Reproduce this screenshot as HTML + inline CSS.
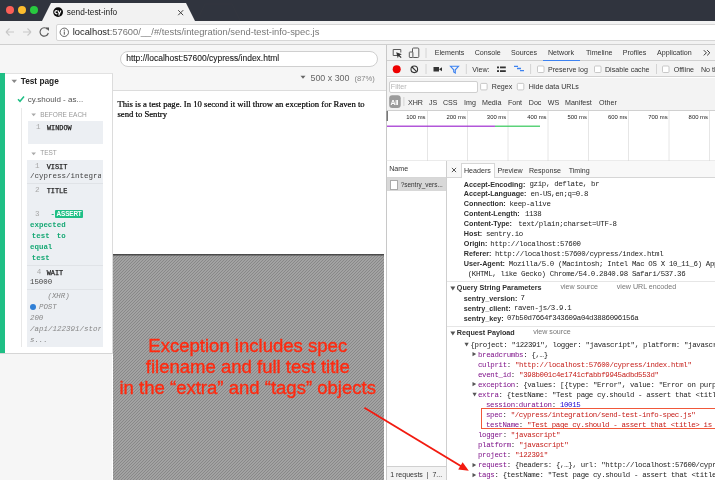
<!DOCTYPE html>
<html><head><meta charset="utf-8">
<style>
*{margin:0;padding:0;box-sizing:border-box;}
html,body{width:715px;height:480px;overflow:hidden;background:#f5f5f5;font-family:"Liberation Sans",sans-serif;}
.a{position:absolute;white-space:nowrap;}
#root{position:relative;width:715px;height:480px;overflow:hidden;will-change:transform;}
</style></head><body><div id="root">
<div class="a" style="left:0px;top:0px;width:715px;height:21px;background:#30343e;"></div>
<div class="a" style="left:5.6px;top:5.8px;width:8px;height:8px;border-radius:50%;background:#fc5f57;"></div>
<div class="a" style="left:18px;top:5.8px;width:8px;height:8px;border-radius:50%;background:#fdbd2e;"></div>
<div class="a" style="left:30.4px;top:5.8px;width:8px;height:8px;border-radius:50%;background:#28c93f;"></div>
<svg class="a" style="left:0;top:0" width="715" height="22">
  <polygon points="197,20.5 205,4 232,4 240,20.5" fill="none" stroke="#33373f" stroke-width="0.7"/>
  <polygon points="42,21 51,3 186,3 195,21" fill="#f2f2f2"/>
</svg>
<svg class="a" style="left:52px;top:6px" width="12" height="12">
  <circle cx="6.1" cy="6.1" r="4.9" fill="#0a0a0a"/>
  <path d="M5.3,4.9 A1.55,1.55 0 1 0 5.3,7.5" stroke="#fff" stroke-width="1.2" fill="none"/>
  <path d="M5.9,4.6 L7.3,7.7 M8.9,4.6 L6.7,9.4" stroke="#fff" stroke-width="1.15" fill="none"/>
</svg>
<div class="a " style="left:66.8px;top:7.67px;font-size:8.3px;line-height:8.3px;font-family:'Liberation Sans',sans-serif;color:#222;">send-test-info</div>
<svg class="a" style="left:177px;top:9px" width="8" height="8">
  <path d="M1.2,1.2 L6.2,6.2 M6.2,1.2 L1.2,6.2" stroke="#444" stroke-width="1"/>
</svg>
<div class="a" style="left:0px;top:21px;width:715px;height:23.5px;background:#f2f2f2;border-bottom:1px solid #cfcfcf;"></div>
<svg class="a" style="left:0;top:21px" width="56" height="23">
  <path d="M6,11 h8 M6,11 l3.5,-3.5 M6,11 l3.5,3.5" stroke="#c8c8c8" stroke-width="1.1" fill="none"/>
  <path d="M31,11 h-8 M31,11 l-3.5,-3.5 M31,11 l-3.5,3.5" stroke="#c8c8c8" stroke-width="1.1" fill="none"/>
  <path d="M47.5,8.3 A4.2,4.2 0 1 0 48.3,12" stroke="#555" stroke-width="1.1" fill="none"/>
  <path d="M45.5,6.5 L49,6.5 L49,10 Z" fill="#555"/>
</svg>
<div class="a" style="left:55.5px;top:23.5px;width:670px;height:17px;background:#fff;border:1px solid #d6d6d6;border-radius:2px;"></div>
<svg class="a" style="left:59px;top:27px" width="11" height="11">
  <circle cx="5.3" cy="5.3" r="4.2" stroke="#555" stroke-width="0.9" fill="none"/>
  <path d="M5.3,4.5 v3.2" stroke="#555" stroke-width="1"/>
  <circle cx="5.3" cy="3.2" r="0.6" fill="#555"/>
</svg>
<div class="a " style="left:72.7px;top:27.67px;font-size:9.37px;line-height:9.37px;font-family:'Liberation Sans',sans-serif;color:#777;"><span style="color:#222">localhost</span>:57600/__/#/tests/integration/send-test-info-spec.js</div>
<div class="a" style="left:0px;top:45px;width:386px;height:435px;background:#f6f6f6;"></div>
<div class="a" style="left:119.5px;top:50.5px;width:258px;height:16px;background:#fff;border:1px solid #cfcfcf;border-radius:8px;"></div>
<div class="a " style="left:126.2px;top:54.03px;font-size:8.47px;line-height:8.47px;font-family:'Liberation Sans',sans-serif;color:#222;-webkit-text-stroke:0.1px #222;">http://localhost:57600/cypress/index.html</div>
<svg class="a" style="left:300px;top:75px" width="6" height="5"><path d="M0.5,0.8 H5.5 L3,3.8 Z" fill="#666"/></svg>
<div class="a " style="left:310.5px;top:73.57px;font-size:8.9px;line-height:8.9px;font-family:'Liberation Sans',sans-serif;color:#666;">500 x 300</div>
<div class="a " style="left:354.5px;top:74.67px;font-size:7.6px;line-height:7.6px;font-family:'Liberation Sans',sans-serif;color:#888;">(87%)</div>
<div class="a" style="left:112px;top:89.5px;width:274px;height:1px;background:#dcdcdc;"></div>
<div class="a" style="left:112px;top:90.5px;width:274px;height:390px;background:#fff;"></div>
<div class="a " style="left:117.5px;top:100.14px;font-size:8.67px;line-height:8.67px;font-family:'Liberation Serif',serif;color:#000;-webkit-text-stroke:0.2px #000;">This is a test page. In 10 second it will throw an exception for Raven to</div>
<div class="a " style="left:117.5px;top:110.14px;font-size:8.67px;line-height:8.67px;font-family:'Liberation Serif',serif;color:#000;-webkit-text-stroke:0.2px #000;">send to Sentry</div>
<svg class="a" style="left:113px;top:253.5px" width="271" height="227">
 <defs><pattern id="st" width="3" height="3" patternUnits="userSpaceOnUse">
  <rect width="3" height="3" fill="#a2a2a2"/>
  <rect x="0" y="2" width="1" height="1" fill="#888"/><rect x="1" y="1" width="1" height="1" fill="#888"/><rect x="2" y="0" width="1" height="1" fill="#888"/>
 </pattern></defs>
 <rect width="271" height="227" fill="url(#st)"/>
 <rect width="271" height="1.5" fill="#4a4a4a"/>
</svg>
<div class="a" style="left:112.25px;top:337.10px;width:271px;text-align:center;font-size:18.55px;line-height:18.55px;color:#ff2a10;-webkit-text-stroke:0.35px #ff2a10;">Exception includes spec</div>
<div class="a" style="left:112.25px;top:357.90px;width:271px;text-align:center;font-size:18.55px;line-height:18.55px;color:#ff2a10;-webkit-text-stroke:0.35px #ff2a10;">filename and full test title</div>
<div class="a" style="left:112.25px;top:378.70px;width:271px;text-align:center;font-size:18.55px;line-height:18.55px;color:#ff2a10;-webkit-text-stroke:0.35px #ff2a10;">in the “extra” and “tags” objects</div>
<div class="a" style="left:0px;top:72.5px;width:112.5px;height:281px;background:#fff;border-top:1px solid #e2e2e2;border-right:1px solid #dcdcdc;border-bottom:1.5px solid #d6d6d6;"></div>
<div class="a" style="left:0px;top:73px;width:4.7px;height:280px;background:#1fbf85;"></div>
<svg class="a" style="left:11px;top:79px" width="7" height="5"><path d="M0.5,0.8 H6 L3.25,4 Z" fill="#888"/></svg>
<div class="a " style="left:20.7px;top:76.87px;font-size:8.3px;line-height:8.3px;font-family:'Liberation Sans',sans-serif;color:#222;font-weight:bold;">Test page</div>
<svg class="a" style="left:17px;top:95px" width="8" height="8"><path d="M1,4.2 L3,6.3 L7,1.6" stroke="#1fbf85" stroke-width="1.5" fill="none"/></svg>
<div class="a " style="left:27.7px;top:95.83px;font-size:8.0px;line-height:8.0px;font-family:'Liberation Sans',sans-serif;color:#555;">cy.should - as...</div>
<div class="a" style="left:20.5px;top:108px;width:1px;height:239px;background:#e8e8e8;"></div>
<svg class="a" style="left:31px;top:113px" width="6" height="4"><path d="M0.3,0.5 H5 L2.65,3.2 Z" fill="#aaa"/></svg>
<div class="a " style="left:40.2px;top:111.50px;font-size:6.5px;line-height:6.5px;font-family:'Liberation Sans',sans-serif;color:#999;">BEFORE EACH</div>
<div class="a" style="left:27.6px;top:120.8px;width:75.4px;height:23.2px;background:#eceff3;"></div>
<div class="a " style="left:36px;top:124.37px;font-size:7.6px;line-height:7.6px;font-family:'Liberation Mono',monospace;color:#a8a8a8;">1</div>
<div class="a " style="left:47px;top:124.96px;font-size:6.83px;line-height:6.83px;font-family:'Liberation Mono',monospace;color:#1e1e1e;-webkit-text-stroke:0.25px #1e1e1e;">WINDOW</div>
<svg class="a" style="left:31px;top:151.5px" width="6" height="4"><path d="M0.3,0.5 H5 L2.65,3.2 Z" fill="#aaa"/></svg>
<div class="a " style="left:40.2px;top:149.80px;font-size:6.5px;line-height:6.5px;font-family:'Liberation Sans',sans-serif;color:#999;">TEST</div>
<div class="a" style="left:27px;top:160px;width:76px;height:187px;background:#eceff3;"></div>
<div class="a" style="left:27px;top:183px;width:76px;height:1px;background:#e0e3e7;"></div>
<div class="a" style="left:27px;top:265px;width:76px;height:1px;background:#e0e3e7;"></div>
<div class="a" style="left:27px;top:289px;width:76px;height:1px;background:#e0e3e7;"></div>
<div class="a " style="left:35px;top:163.17px;font-size:7.6px;line-height:7.6px;font-family:'Liberation Mono',monospace;color:#a8a8a8;">1</div>
<div class="a " style="left:46.7px;top:163.71px;font-size:6.9px;line-height:6.9px;font-family:'Liberation Mono',monospace;color:#1e1e1e;-webkit-text-stroke:0.25px #1e1e1e;">VISIT</div>
<div class="a " style="left:30px;top:173.25px;font-size:7.5px;line-height:7.5px;font-family:'Liberation Mono',monospace;color:#444;width:70.5px;overflow:hidden;">/cypress/integration</div>
<div class="a " style="left:35px;top:187.17px;font-size:7.6px;line-height:7.6px;font-family:'Liberation Mono',monospace;color:#a8a8a8;">2</div>
<div class="a " style="left:46.7px;top:187.71px;font-size:6.9px;line-height:6.9px;font-family:'Liberation Mono',monospace;color:#1e1e1e;-webkit-text-stroke:0.25px #1e1e1e;">TITLE</div>
<div class="a " style="left:35px;top:210.67px;font-size:7.6px;line-height:7.6px;font-family:'Liberation Mono',monospace;color:#a8a8a8;">3</div>
<div class="a " style="left:50.5px;top:210.83px;font-size:7.4px;line-height:7.4px;font-family:'Liberation Mono',monospace;color:#1fae7a;font-weight:bold;">-</div>
<div class="a" style="left:55px;top:210px;width:28px;height:7.5px;background:#1fbf85;border-radius:1px;"></div>
<div class="a " style="left:56.6px;top:210.98px;font-size:6.4px;line-height:6.4px;font-family:'Liberation Sans',sans-serif;color:#fff;font-weight:bold;letter-spacing:-0.15px;">ASSERT</div>
<div class="a " style="left:30px;top:221.79px;font-size:7.45px;line-height:7.45px;font-family:'Liberation Mono',monospace;color:#16a874;font-weight:bold;">expected</div>
<div class="a " style="left:31.8px;top:232.89px;font-size:7.45px;line-height:7.45px;font-family:'Liberation Mono',monospace;color:#16a874;font-weight:bold;">test</div>
<div class="a " style="left:56.7px;top:232.89px;font-size:7.45px;line-height:7.45px;font-family:'Liberation Mono',monospace;color:#16a874;font-weight:bold;">to</div>
<div class="a " style="left:30px;top:243.99px;font-size:7.45px;line-height:7.45px;font-family:'Liberation Mono',monospace;color:#16a874;font-weight:bold;">equal</div>
<div class="a " style="left:31.8px;top:255.09px;font-size:7.45px;line-height:7.45px;font-family:'Liberation Mono',monospace;color:#16a874;font-weight:bold;">test</div>
<div class="a " style="left:36.7px;top:269.17px;font-size:7.6px;line-height:7.6px;font-family:'Liberation Mono',monospace;color:#a8a8a8;">4</div>
<div class="a " style="left:46.7px;top:269.71px;font-size:6.9px;line-height:6.9px;font-family:'Liberation Mono',monospace;color:#1e1e1e;-webkit-text-stroke:0.25px #1e1e1e;">WAIT</div>
<div class="a " style="left:30px;top:279.33px;font-size:7.4px;line-height:7.4px;font-family:'Liberation Mono',monospace;color:#444;">15000</div>
<div class="a " style="left:47.5px;top:293.33px;font-size:7.4px;line-height:7.4px;font-family:'Liberation Mono',monospace;color:#888;font-style:italic;">(XHR)</div>
<div class="a" style="left:30.3px;top:303.7px;width:6px;height:6px;border-radius:50%;background:#2f7fd6;"></div>
<div class="a " style="left:39px;top:304.03px;font-size:7.4px;line-height:7.4px;font-family:'Liberation Mono',monospace;color:#888;font-style:italic;">POST</div>
<div class="a " style="left:30px;top:315.13px;font-size:7.4px;line-height:7.4px;font-family:'Liberation Mono',monospace;color:#888;font-style:italic;">200</div>
<div class="a " style="left:30px;top:325.95px;font-size:7.5px;line-height:7.5px;font-family:'Liberation Mono',monospace;color:#888;font-style:italic;width:70.5px;overflow:hidden;">/api/122391/store</div>
<div class="a " style="left:30px;top:337.33px;font-size:7.4px;line-height:7.4px;font-family:'Liberation Mono',monospace;color:#888;font-style:italic;">s...</div>
<div class="a" style="left:386px;top:44.5px;width:329px;height:435.5px;background:#fff;border-left:1px solid #c8c8c8;"></div>
<div class="a" style="left:387px;top:44.5px;width:328px;height:16px;background:#f3f3f3;border-bottom:1px solid #d0d0d0;"></div>
<svg class="a" style="left:387px;top:45px" width="45" height="16">
  <path d="M10.5,10.5 H6.2 V4.5 H13.8 V7.5" stroke="#5a5a5a" stroke-width="1" fill="none"/>
  <path d="M9.2,7.2 L14.8,9.3 L12.6,10.2 L14.6,12.2 L13.7,13.1 L11.7,11.1 L10.8,13.3 Z" fill="#333"/>
  <rect x="25.5" y="3" width="6.3" height="9.5" rx="1" stroke="#5a5a5a" stroke-width="1" fill="none"/>
  <rect x="22.3" y="7" width="3.6" height="5.5" rx="0.6" stroke="#5a5a5a" stroke-width="1" fill="#f3f3f3"/>
  <path d="M39,3 V13" stroke="#d4d4d4" stroke-width="1"/>
</svg>
<div class="a " style="left:434.8px;top:50.19px;font-size:7.1px;line-height:7.1px;font-family:'Liberation Sans',sans-serif;color:#333;">Elements</div>
<div class="a " style="left:474.7px;top:50.19px;font-size:7.1px;line-height:7.1px;font-family:'Liberation Sans',sans-serif;color:#333;">Console</div>
<div class="a " style="left:511px;top:50.19px;font-size:7.1px;line-height:7.1px;font-family:'Liberation Sans',sans-serif;color:#333;">Sources</div>
<div class="a " style="left:548px;top:50.19px;font-size:7.1px;line-height:7.1px;font-family:'Liberation Sans',sans-serif;color:#333;">Network</div>
<div class="a " style="left:586px;top:50.19px;font-size:7.1px;line-height:7.1px;font-family:'Liberation Sans',sans-serif;color:#333;">Timeline</div>
<div class="a " style="left:622.7px;top:50.19px;font-size:7.1px;line-height:7.1px;font-family:'Liberation Sans',sans-serif;color:#333;">Profiles</div>
<div class="a " style="left:657px;top:50.19px;font-size:7.1px;line-height:7.1px;font-family:'Liberation Sans',sans-serif;color:#333;">Application</div>
<svg class="a" style="left:702px;top:48px" width="10" height="10"><path d="M1.8,2.2 L4.4,4.8 L1.8,7.4 M5.2,2.2 L7.8,4.8 L5.2,7.4" stroke="#333" stroke-width="1" fill="none"/></svg>
<div class="a" style="left:543px;top:59.5px;width:37px;height:1.5px;background:#3d82f0;"></div>
<div class="a" style="left:387px;top:61px;width:328px;height:16px;background:#f3f3f3;border-bottom:1px solid #d0d0d0;"></div>
<svg class="a" style="left:387px;top:61px" width="328" height="16">
  <circle cx="9.7" cy="8.3" r="4" fill="#e00"/>
  <circle cx="27.3" cy="8.3" r="3.3" stroke="#333" stroke-width="1.1" fill="none"/>
  <path d="M25,6 L29.6,10.6" stroke="#333" stroke-width="1.1"/>
  <path d="M39,3 V13" stroke="#d4d4d4" stroke-width="1"/>
  <rect x="46.5" y="6" width="5.5" height="4.5" fill="#333"/>
  <path d="M52,8.2 L55,6.3 V10.2 Z" fill="#333"/>
  <path d="M63.5,5.3 H71.5 L68.3,8.8 V12 L66.7,11 V8.8 Z" stroke="#3d82f0" stroke-width="1.1" fill="none"/>
  <path d="M79.3,3 V13" stroke="#d4d4d4" stroke-width="1"/>
  <rect x="110" y="5.5" width="2" height="1.8" fill="#333"/><rect x="113" y="5.5" width="5.8" height="1.8" fill="#333"/>
  <rect x="110" y="9.2" width="2" height="1.8" fill="#333"/><rect x="113" y="9.2" width="5.8" height="1.8" fill="#333"/>
  <path d="M127,5.3 h4 M130,7.5 h4 M133,9.7 h4" stroke="#3d82f0" stroke-width="1.3"/>
  <path d="M143.6,3 V13" stroke="#d4d4d4" stroke-width="1"/>
  <rect x="150.5" y="5" width="6.5" height="6.5" rx="1" stroke="#bbb" stroke-width="0.8" fill="#fff"/>
  <rect x="207.5" y="5" width="6.5" height="6.5" rx="1" stroke="#bbb" stroke-width="0.8" fill="#fff"/>
  <path d="M269.5,3 V13" stroke="#d4d4d4" stroke-width="1"/>
  <rect x="275.5" y="5" width="6.5" height="6.5" rx="1" stroke="#bbb" stroke-width="0.8" fill="#fff"/>
</svg>
<div class="a " style="left:472.3px;top:67.09px;font-size:7.1px;line-height:7.1px;font-family:'Liberation Sans',sans-serif;color:#333;">View:</div>
<div class="a " style="left:548px;top:67.09px;font-size:7.1px;line-height:7.1px;font-family:'Liberation Sans',sans-serif;color:#333;">Preserve log</div>
<div class="a " style="left:605px;top:67.09px;font-size:7.1px;line-height:7.1px;font-family:'Liberation Sans',sans-serif;color:#333;">Disable cache</div>
<div class="a " style="left:673.7px;top:67.09px;font-size:7.1px;line-height:7.1px;font-family:'Liberation Sans',sans-serif;color:#333;">Offline</div>
<div class="a " style="left:701px;top:67.09px;font-size:7.1px;line-height:7.1px;font-family:'Liberation Sans',sans-serif;color:#333;">No throttling</div>
<div class="a" style="left:387px;top:78px;width:328px;height:32.5px;background:#f3f3f3;border-bottom:1px solid #d0d0d0;"></div>
<div class="a" style="left:388.5px;top:80.5px;width:89.5px;height:12px;background:#fff;border:1px solid #cfcfcf;border-radius:2px;"></div>
<div class="a " style="left:390.8px;top:83.69px;font-size:7.1px;line-height:7.1px;font-family:'Liberation Sans',sans-serif;color:#b5b5b5;">Filter</div>
<svg class="a" style="left:387px;top:78px" width="328" height="33">
  <rect x="93.6" y="5.4" width="6.5" height="6.5" rx="1" stroke="#bbb" stroke-width="0.8" fill="#fff"/>
  <rect x="130.3" y="5.4" width="6.5" height="6.5" rx="1" stroke="#bbb" stroke-width="0.8" fill="#fff"/>
  <rect x="2.2" y="17.3" width="11.5" height="12.6" rx="3" fill="#9b9b9b"/>
  <path d="M16.9,19 V28" stroke="#d4d4d4" stroke-width="1"/>
</svg>
<div class="a " style="left:390.6px;top:98.87px;font-size:7px;line-height:7px;font-family:'Liberation Sans',sans-serif;color:#fff;font-weight:bold;letter-spacing:-0.5px;">All</div>
<div class="a " style="left:491.8px;top:84.19px;font-size:7.1px;line-height:7.1px;font-family:'Liberation Sans',sans-serif;color:#333;">Regex</div>
<div class="a " style="left:528.8px;top:84.19px;font-size:7.1px;line-height:7.1px;font-family:'Liberation Sans',sans-serif;color:#333;">Hide data URLs</div>
<div class="a " style="left:408px;top:99.59px;font-size:7.1px;line-height:7.1px;font-family:'Liberation Sans',sans-serif;color:#333;">XHR</div>
<div class="a " style="left:429px;top:99.59px;font-size:7.1px;line-height:7.1px;font-family:'Liberation Sans',sans-serif;color:#333;">JS</div>
<div class="a " style="left:443px;top:99.59px;font-size:7.1px;line-height:7.1px;font-family:'Liberation Sans',sans-serif;color:#333;">CSS</div>
<div class="a " style="left:464px;top:99.59px;font-size:7.1px;line-height:7.1px;font-family:'Liberation Sans',sans-serif;color:#333;">Img</div>
<div class="a " style="left:482px;top:99.59px;font-size:7.1px;line-height:7.1px;font-family:'Liberation Sans',sans-serif;color:#333;">Media</div>
<div class="a " style="left:507.9px;top:99.59px;font-size:7.1px;line-height:7.1px;font-family:'Liberation Sans',sans-serif;color:#333;">Font</div>
<div class="a " style="left:528.8px;top:99.59px;font-size:7.1px;line-height:7.1px;font-family:'Liberation Sans',sans-serif;color:#333;">Doc</div>
<div class="a " style="left:547.7px;top:99.59px;font-size:7.1px;line-height:7.1px;font-family:'Liberation Sans',sans-serif;color:#333;">WS</div>
<div class="a " style="left:565px;top:99.59px;font-size:7.1px;line-height:7.1px;font-family:'Liberation Sans',sans-serif;color:#333;">Manifest</div>
<div class="a " style="left:599px;top:99.59px;font-size:7.1px;line-height:7.1px;font-family:'Liberation Sans',sans-serif;color:#333;">Other</div>
<svg class="a" style="left:386px;top:111px" width="329" height="50">
  <g stroke="#e6e6e6" stroke-width="1">
    <path d="M41.5,0 V50 M81.5,0 V50 M122,0 V50 M162,0 V50 M202.5,0 V50 M242.5,0 V50 M283,0 V50 M323.5,0 V50"/>
  </g>
  <rect x="0.5" y="0" width="1.5" height="10" fill="#777"/>
  <rect x="1" y="14.6" width="108" height="1.2" fill="#a02ed0"/>
  <rect x="109" y="14.6" width="45" height="1.2" fill="#35c85a"/>
  <rect x="0" y="49.5" width="329" height="1" fill="#d6d6d6"/>
</svg>
<div class="a" style="left:385.50px;width:40px;text-align:right;top:114.61px;font-size:5.9px;line-height:5.9px;color:#1a1a1a;">100 ms</div>
<div class="a" style="left:425.85px;width:40px;text-align:right;top:114.61px;font-size:5.9px;line-height:5.9px;color:#1a1a1a;">200 ms</div>
<div class="a" style="left:466.20px;width:40px;text-align:right;top:114.61px;font-size:5.9px;line-height:5.9px;color:#1a1a1a;">300 ms</div>
<div class="a" style="left:506.55px;width:40px;text-align:right;top:114.61px;font-size:5.9px;line-height:5.9px;color:#1a1a1a;">400 ms</div>
<div class="a" style="left:546.90px;width:40px;text-align:right;top:114.61px;font-size:5.9px;line-height:5.9px;color:#1a1a1a;">500 ms</div>
<div class="a" style="left:587.25px;width:40px;text-align:right;top:114.61px;font-size:5.9px;line-height:5.9px;color:#1a1a1a;">600 ms</div>
<div class="a" style="left:627.60px;width:40px;text-align:right;top:114.61px;font-size:5.9px;line-height:5.9px;color:#1a1a1a;">700 ms</div>
<div class="a" style="left:667.95px;width:40px;text-align:right;top:114.61px;font-size:5.9px;line-height:5.9px;color:#1a1a1a;">800 ms</div>
<div class="a" style="left:446px;top:161px;width:1px;height:319px;background:#cfcfcf;"></div>
<div class="a" style="left:387px;top:176.8px;width:59px;height:1px;background:#d6d6d6;"></div>
<div class="a " style="left:389.2px;top:166.49px;font-size:7.1px;line-height:7.1px;font-family:'Liberation Sans',sans-serif;color:#333;">Name</div>
<div class="a" style="left:387px;top:178px;width:59px;height:13.3px;background:#d8d8d8;"></div>
<div class="a" style="left:390.2px;top:180.2px;width:7.4px;height:9.5px;background:#fff;border:1px solid #aaa;"></div>
<div class="a " style="left:400.7px;top:181.96px;font-size:6.43px;line-height:6.43px;font-family:'Liberation Sans',sans-serif;color:#333;">?sentry_vers...</div>
<div class="a" style="left:387px;top:466px;width:59px;height:14px;background:#f3f3f3;border-top:1px solid #d0d0d0;"></div>
<div class="a" style="left:446px;top:161px;width:1px;height:319px;background:#cfcfcf;"></div>
<div class="a " style="left:390.2px;top:471.07px;font-size:7.0px;line-height:7.0px;font-family:'Liberation Sans',sans-serif;color:#333;">1 requests&nbsp; |&nbsp; 7...</div>
<div class="a" style="left:447px;top:161px;width:268px;height:16.5px;background:#f8f8f8;border-bottom:1px solid #d6d6d6;"></div>
<svg class="a" style="left:450px;top:166px" width="8" height="8">
  <path d="M1.9,1.9 L6.1,6.1 M6.1,1.9 L1.9,6.1" stroke="#444" stroke-width="0.9"/>
</svg>
<div class="a" style="left:461.2px;top:163px;width:33.6px;height:15px;background:#fff;border:1px solid #d6d6d6;border-bottom:none;"></div>
<div class="a " style="left:464px;top:167.99px;font-size:7.1px;line-height:7.1px;font-family:'Liberation Sans',sans-serif;color:#333;">Headers</div>
<div class="a " style="left:497.5px;top:167.99px;font-size:7.1px;line-height:7.1px;font-family:'Liberation Sans',sans-serif;color:#333;">Preview</div>
<div class="a " style="left:529px;top:167.99px;font-size:7.1px;line-height:7.1px;font-family:'Liberation Sans',sans-serif;color:#333;">Response</div>
<div class="a " style="left:568.7px;top:167.99px;font-size:7.1px;line-height:7.1px;font-family:'Liberation Sans',sans-serif;color:#333;">Timing</div>
<div class="a " style="left:463.8px;top:180.51px;font-size:7.2px;line-height:7.2px;font-family:'Liberation Sans',sans-serif;color:#303030;font-weight:bold;">Accept-Encoding:</div>
<div class="a " style="left:529.5px;top:180.93px;font-size:7.4px;line-height:7.4px;font-family:'Liberation Mono',monospace;color:#222;letter-spacing:-0.33px;">gzip,&nbsp;deflate,&nbsp;br</div>
<div class="a " style="left:463.8px;top:190.46px;font-size:7.2px;line-height:7.2px;font-family:'Liberation Sans',sans-serif;color:#303030;font-weight:bold;">Accept-Language:</div>
<div class="a " style="left:530.6px;top:190.88px;font-size:7.4px;line-height:7.4px;font-family:'Liberation Mono',monospace;color:#222;letter-spacing:-0.33px;">en-US,en;q=0.8</div>
<div class="a " style="left:463.8px;top:200.41px;font-size:7.2px;line-height:7.2px;font-family:'Liberation Sans',sans-serif;color:#303030;font-weight:bold;">Connection:</div>
<div class="a " style="left:509.5px;top:200.83px;font-size:7.4px;line-height:7.4px;font-family:'Liberation Mono',monospace;color:#222;letter-spacing:-0.33px;">keep-alive</div>
<div class="a " style="left:463.8px;top:210.36px;font-size:7.2px;line-height:7.2px;font-family:'Liberation Sans',sans-serif;color:#303030;font-weight:bold;">Content-Length:</div>
<div class="a " style="left:524.9px;top:210.78px;font-size:7.4px;line-height:7.4px;font-family:'Liberation Mono',monospace;color:#222;letter-spacing:-0.33px;">1138</div>
<div class="a " style="left:463.8px;top:220.31px;font-size:7.2px;line-height:7.2px;font-family:'Liberation Sans',sans-serif;color:#303030;font-weight:bold;">Content-Type:</div>
<div class="a " style="left:518.2px;top:220.73px;font-size:7.4px;line-height:7.4px;font-family:'Liberation Mono',monospace;color:#222;letter-spacing:-0.33px;">text/plain;charset=UTF-8</div>
<div class="a " style="left:463.8px;top:230.26px;font-size:7.2px;line-height:7.2px;font-family:'Liberation Sans',sans-serif;color:#303030;font-weight:bold;">Host:</div>
<div class="a " style="left:485.9px;top:230.68px;font-size:7.4px;line-height:7.4px;font-family:'Liberation Mono',monospace;color:#222;letter-spacing:-0.33px;">sentry.io</div>
<div class="a " style="left:463.8px;top:240.21px;font-size:7.2px;line-height:7.2px;font-family:'Liberation Sans',sans-serif;color:#303030;font-weight:bold;">Origin:</div>
<div class="a " style="left:490.3px;top:240.63px;font-size:7.4px;line-height:7.4px;font-family:'Liberation Mono',monospace;color:#222;letter-spacing:-0.33px;">http://localhost:57600</div>
<div class="a " style="left:463.8px;top:250.16px;font-size:7.2px;line-height:7.2px;font-family:'Liberation Sans',sans-serif;color:#303030;font-weight:bold;">Referer:</div>
<div class="a " style="left:495px;top:250.58px;font-size:7.4px;line-height:7.4px;font-family:'Liberation Mono',monospace;color:#222;letter-spacing:-0.33px;">http://localhost:57600/cypress/index.html</div>
<div class="a " style="left:463.8px;top:260.11px;font-size:7.2px;line-height:7.2px;font-family:'Liberation Sans',sans-serif;color:#303030;font-weight:bold;">User-Agent:</div>
<div class="a " style="left:508.8px;top:260.53px;font-size:7.4px;line-height:7.4px;font-family:'Liberation Mono',monospace;color:#222;letter-spacing:-0.33px;">Mozilla/5.0&nbsp;(Macintosh;&nbsp;Intel&nbsp;Mac&nbsp;OS&nbsp;X&nbsp;10_11_6)&nbsp;AppleWebKit/537.36</div>
<div class="a " style="left:467.7px;top:271.13px;font-size:7.4px;line-height:7.4px;font-family:'Liberation Mono',monospace;color:#222;letter-spacing:-0.33px;">(KHTML,&nbsp;like&nbsp;Gecko)&nbsp;Chrome/54.0.2840.98&nbsp;Safari/537.36</div>
<div class="a" style="left:447px;top:281px;width:268px;height:1px;background:#e6e6e6;"></div>
<svg class="a" style="left:449.5px;top:285.6px" width="6" height="6"><path d="M0.3,0.5 H5.3 L2.8,4.6 Z" fill="#555"/></svg>
<div class="a " style="left:456.8px;top:284.01px;font-size:7.2px;line-height:7.2px;font-family:'Liberation Sans',sans-serif;color:#303030;font-weight:bold;">Query String Parameters</div>
<div class="a " style="left:560.5px;top:284.09px;font-size:7.1px;line-height:7.1px;font-family:'Liberation Sans',sans-serif;color:#777;">view source</div>
<div class="a " style="left:616.8px;top:284.09px;font-size:7.1px;line-height:7.1px;font-family:'Liberation Sans',sans-serif;color:#777;">view URL encoded</div>
<div class="a " style="left:463.8px;top:294.91px;font-size:7.2px;line-height:7.2px;font-family:'Liberation Sans',sans-serif;color:#303030;font-weight:bold;">sentry_version:</div>
<div class="a " style="left:520.5px;top:295.33px;font-size:7.4px;line-height:7.4px;font-family:'Liberation Mono',monospace;color:#222;letter-spacing:-0.33px;">7</div>
<div class="a " style="left:463.8px;top:304.91px;font-size:7.2px;line-height:7.2px;font-family:'Liberation Sans',sans-serif;color:#303030;font-weight:bold;">sentry_client:</div>
<div class="a " style="left:513.9px;top:305.33px;font-size:7.4px;line-height:7.4px;font-family:'Liberation Mono',monospace;color:#222;letter-spacing:-0.33px;">raven-js/3.9.1</div>
<div class="a " style="left:463.8px;top:314.91px;font-size:7.2px;line-height:7.2px;font-family:'Liberation Sans',sans-serif;color:#303030;font-weight:bold;">sentry_key:</div>
<div class="a " style="left:507px;top:315.33px;font-size:7.4px;line-height:7.4px;font-family:'Liberation Mono',monospace;color:#222;letter-spacing:-0.33px;">07b50d7664f343609a04d3886096156a</div>
<div class="a" style="left:447px;top:326px;width:268px;height:1px;background:#e6e6e6;"></div>
<svg class="a" style="left:449.5px;top:330.6px" width="6" height="6"><path d="M0.3,0.5 H5.3 L2.8,4.6 Z" fill="#555"/></svg>
<div class="a " style="left:456.8px;top:329.01px;font-size:7.2px;line-height:7.2px;font-family:'Liberation Sans',sans-serif;color:#303030;font-weight:bold;">Request Payload</div>
<div class="a " style="left:533.2px;top:329.09px;font-size:7.1px;line-height:7.1px;font-family:'Liberation Sans',sans-serif;color:#777;">view source</div>
<div class="a " style="left:470.5px;top:341.73px;font-size:7.4px;line-height:7.4px;font-family:'Liberation Mono',monospace;letter-spacing:-0.33px;"><span style="color:#222">{project:&nbsp;"122391",&nbsp;logger:&nbsp;"javascript",&nbsp;platform:&nbsp;"javascript"}</span></div>
<svg class="a" style="left:464.00px;top:341.90px" width="6" height="6"><path d="M0.5,0.8 H4.7 L2.6,4.6 Z" fill="#555"/></svg>
<div class="a " style="left:478px;top:351.75px;font-size:7.4px;line-height:7.4px;font-family:'Liberation Mono',monospace;letter-spacing:-0.33px;"><span style="color:#7e1189">breadcrumbs</span><span style="color:#222">:&nbsp;{,…}</span></div>
<svg class="a" style="left:471.50px;top:351.42px" width="6" height="6"><path d="M0.5,1 V5.2 L4.2,3.1 Z" fill="#555"/></svg>
<div class="a " style="left:478px;top:361.77px;font-size:7.4px;line-height:7.4px;font-family:'Liberation Mono',monospace;letter-spacing:-0.33px;"><span style="color:#7e1189">culprit</span><span style="color:#222">:&nbsp;</span><span style="color:#c41a16">"http://localhost:57600/cypress/index.html"</span></div>
<div class="a " style="left:478px;top:371.79px;font-size:7.4px;line-height:7.4px;font-family:'Liberation Mono',monospace;letter-spacing:-0.33px;"><span style="color:#7e1189">event_id</span><span style="color:#222">:&nbsp;</span><span style="color:#c41a16">"398b001c4e1741cfabbf9945adbd553d"</span></div>
<div class="a " style="left:478px;top:381.81px;font-size:7.4px;line-height:7.4px;font-family:'Liberation Mono',monospace;letter-spacing:-0.33px;"><span style="color:#7e1189">exception</span><span style="color:#222">:&nbsp;{values:&nbsp;[{type:&nbsp;"Error",&nbsp;value:&nbsp;"Error&nbsp;on&nbsp;purpose"}]}</span></div>
<svg class="a" style="left:471.50px;top:381.48px" width="6" height="6"><path d="M0.5,1 V5.2 L4.2,3.1 Z" fill="#555"/></svg>
<div class="a " style="left:478px;top:391.83px;font-size:7.4px;line-height:7.4px;font-family:'Liberation Mono',monospace;letter-spacing:-0.33px;"><span style="color:#7e1189">extra</span><span style="color:#222">:&nbsp;{testName:&nbsp;"Test&nbsp;page&nbsp;cy.should&nbsp;-&nbsp;assert&nbsp;that&nbsp;&lt;title&gt;&nbsp;is"}</span></div>
<svg class="a" style="left:471.50px;top:392.00px" width="6" height="6"><path d="M0.5,0.8 H4.7 L2.6,4.6 Z" fill="#555"/></svg>
<div class="a " style="left:486px;top:401.85px;font-size:7.4px;line-height:7.4px;font-family:'Liberation Mono',monospace;letter-spacing:-0.33px;"><span style="color:#7e1189">session:duration</span><span style="color:#222">:&nbsp;</span><span style="color:#1c00cf">10015</span></div>
<div class="a " style="left:486px;top:411.87px;font-size:7.4px;line-height:7.4px;font-family:'Liberation Mono',monospace;letter-spacing:-0.33px;"><span style="color:#7e1189">spec</span><span style="color:#222">:&nbsp;</span><span style="color:#c41a16">"/cypress/integration/send-test-info-spec.js"</span></div>
<div class="a " style="left:486px;top:421.89px;font-size:7.4px;line-height:7.4px;font-family:'Liberation Mono',monospace;letter-spacing:-0.33px;"><span style="color:#7e1189">testName</span><span style="color:#222">:&nbsp;</span><span style="color:#c41a16">"Test&nbsp;page&nbsp;cy.should&nbsp;-&nbsp;assert&nbsp;that&nbsp;&lt;title&gt;&nbsp;is&nbsp;test"</span></div>
<div class="a " style="left:478px;top:431.91px;font-size:7.4px;line-height:7.4px;font-family:'Liberation Mono',monospace;letter-spacing:-0.33px;"><span style="color:#7e1189">logger</span><span style="color:#222">:&nbsp;</span><span style="color:#c41a16">"javascript"</span></div>
<div class="a " style="left:478px;top:441.93px;font-size:7.4px;line-height:7.4px;font-family:'Liberation Mono',monospace;letter-spacing:-0.33px;"><span style="color:#7e1189">platform</span><span style="color:#222">:&nbsp;</span><span style="color:#c41a16">"javascript"</span></div>
<div class="a " style="left:478px;top:451.95px;font-size:7.4px;line-height:7.4px;font-family:'Liberation Mono',monospace;letter-spacing:-0.33px;"><span style="color:#7e1189">project</span><span style="color:#222">:&nbsp;</span><span style="color:#c41a16">"122391"</span></div>
<div class="a " style="left:478px;top:461.97px;font-size:7.4px;line-height:7.4px;font-family:'Liberation Mono',monospace;letter-spacing:-0.33px;"><span style="color:#7e1189">request</span><span style="color:#222">:&nbsp;{headers:&nbsp;{,…},&nbsp;url:&nbsp;"http://localhost:57600/cypress/index.html"}</span></div>
<svg class="a" style="left:471.50px;top:461.64px" width="6" height="6"><path d="M0.5,1 V5.2 L4.2,3.1 Z" fill="#555"/></svg>
<div class="a " style="left:478px;top:471.99px;font-size:7.4px;line-height:7.4px;font-family:'Liberation Mono',monospace;letter-spacing:-0.33px;"><span style="color:#7e1189">tags</span><span style="color:#222">:&nbsp;{testName:&nbsp;"Test&nbsp;page&nbsp;cy.should&nbsp;-&nbsp;assert&nbsp;that&nbsp;&lt;title&gt;&nbsp;is&nbsp;test"}</span></div>
<svg class="a" style="left:471.50px;top:471.66px" width="6" height="6"><path d="M0.5,1 V5.2 L4.2,3.1 Z" fill="#555"/></svg>
<div class="a" style="left:481.2px;top:408px;width:240px;height:21.2px;border:1.5px solid #f0583a;"></div>
<svg class="a" style="left:0;top:0" width="715" height="480">
  <path d="M364.4,407.8 L462,466.8" stroke="#f21b10" stroke-width="1.9"/>
  <path d="M468.8,470.8 L458.2,469.6 L462.6,462.3 Z" fill="#f21b10"/>
</svg>
</div></body></html>
